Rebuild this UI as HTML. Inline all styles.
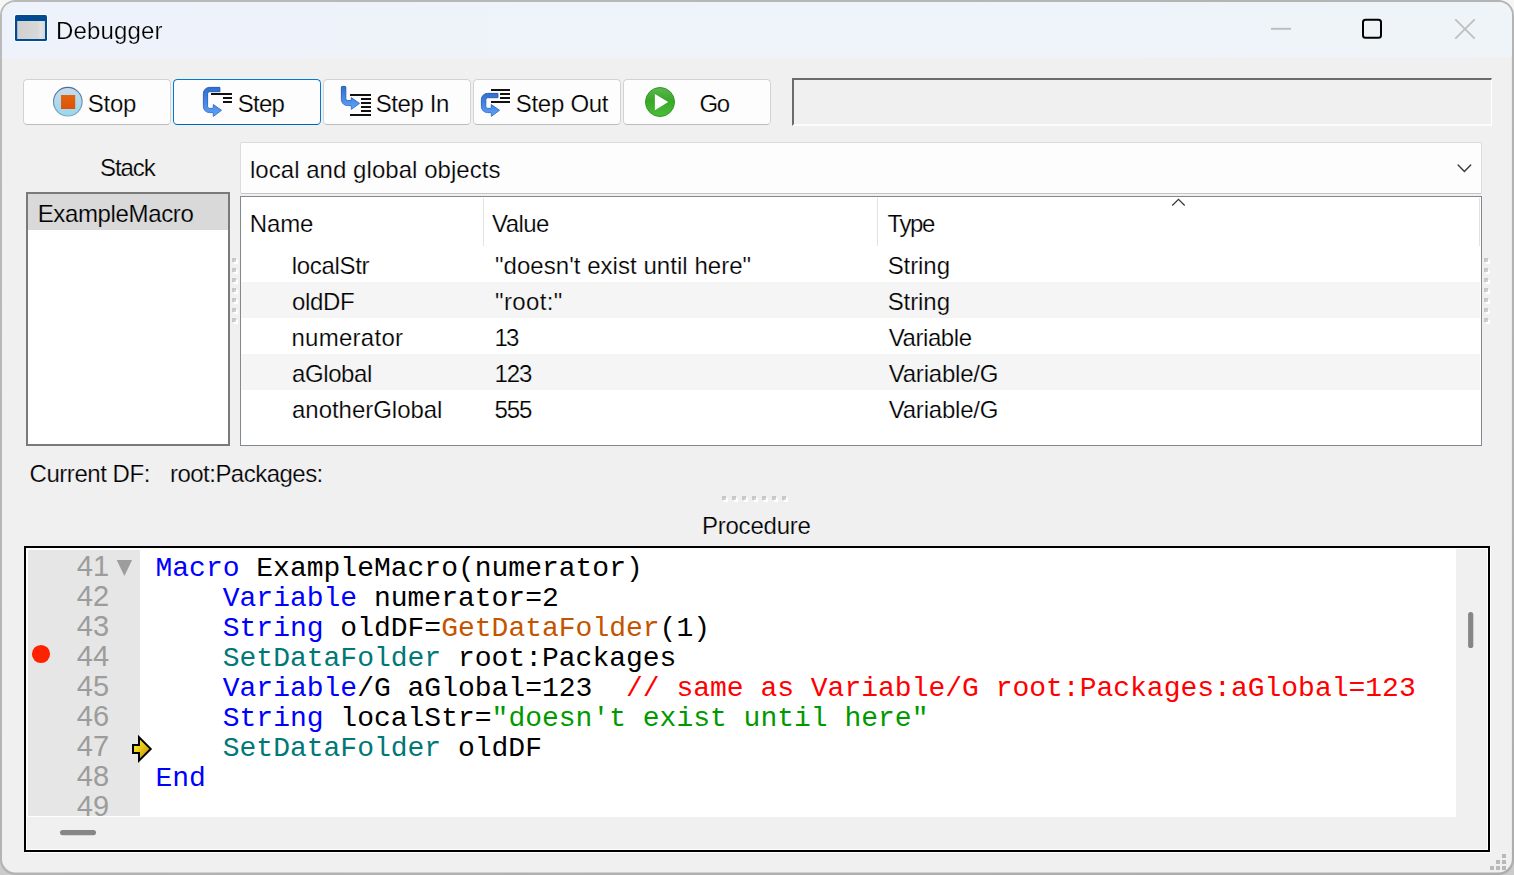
<!DOCTYPE html>
<html>
<head>
<meta charset="utf-8">
<title>Debugger</title>
<style>
html,body{margin:0;padding:0;}
body{width:1514px;height:875px;overflow:hidden;background:linear-gradient(180deg,#f6f6f6 0%,#f2f2f2 50%,#cbcbcb 100%);font-family:"Liberation Sans",sans-serif;position:relative;}
.abs{position:absolute;box-sizing:border-box;}
.t{position:absolute;white-space:pre;line-height:1;font-family:"Liberation Sans",sans-serif;}
.btn{top:79px;width:148px;height:46px;background:#fdfdfd;border:1px solid #d2d2d2;border-bottom-color:#bcbcbc;border-radius:4.5px;}
.btn.focus{border:1.5px solid #0078d4;border-bottom-color:#0064b4;}
#field{left:792px;top:78px;width:700px;height:48px;background:#f0f0f0;border-style:solid;border-width:2px 1px 2px 2px;border-color:#6b6b6b #ffffff #fcfcfc #6b6b6b;}
#combo{left:240px;top:142px;width:1242px;height:52px;background:#fdfdfd;border:1px solid #dcdcdc;border-bottom-color:#c6c6c6;border-radius:2px;}
#stack{left:26px;top:192px;width:204px;height:254px;background:#fff;border:2px solid #7a7a7a;}
#stacksel{left:28px;top:194px;width:200px;height:36px;background:#d9d9d9;}
#table{left:240px;top:196px;width:1242px;height:250px;background:#fff;border:1px solid #828790;}
.stripe{left:241px;width:1239px;height:36px;background:#f5f5f5;}
.hsep{top:198px;width:1px;height:48px;background:#e2e2e2;}
#proc{left:24px;top:546px;width:1466px;height:306px;background:#f0f0f0;border:2px solid #000;box-shadow:1px 1px 0 #fff, inset 0 0 0 1px #fff;}
#codewrap{left:26px;top:548px;width:1430px;height:269px;background:#fff;overflow:hidden;}
#gutter{left:2px;top:2px;width:112px;height:266px;background:#e6e6e6;}
#codearea{left:2px;top:2px;width:1428px;height:267px;overflow:hidden;}
.cl{position:absolute;left:127.5px;white-space:pre;line-height:1;font-family:"Liberation Mono",monospace;font-size:28px;color:#000;}
.ln{position:absolute;left:0;width:81.1px;text-align:right;white-space:pre;line-height:1;font-family:"Liberation Sans",sans-serif;font-size:29px;letter-spacing:0;color:#9c9c9c;}
.k{color:#0000ff}.f{color:#c45500}.o{color:#007878}.c{color:#ff0000}.s{color:#009a00}
#gutterclip{left:0;top:0;width:112px;height:266px;overflow:hidden;}
svg{position:absolute;left:0;top:0;}
</style>
</head>
<body>
<svg width="1514" height="875" viewBox="0 0 1514 875">
<defs>
<linearGradient id="gtb" x1="0" y1="0" x2="1" y2="0"><stop offset="0" stop-color="#eef3fb"/><stop offset="1" stop-color="#eff4f9"/></linearGradient>
<linearGradient id="gfr" x1="0" y1="0" x2="1" y2="1"><stop offset="0" stop-color="#bababa"/><stop offset="1" stop-color="#adadad"/></linearGradient>
<clipPath id="cpc"><rect x="2" y="1.9" width="1509.9" height="870.6" rx="13.5"/></clipPath>
</defs>
<rect x="0" y="0" width="1514" height="875" rx="15.5" fill="url(#gfr)"/>
<rect x="2" y="1.9" width="1509.9" height="870.6" rx="13.5" fill="#f0f0f0"/>
<rect x="0" y="0" width="1514" height="57.6" fill="url(#gtb)" clip-path="url(#cpc)"/>
</svg>

<div class="abs btn" style="left:23px"></div>
<div class="abs btn focus" style="left:173px"></div>
<div class="abs btn" style="left:323px"></div>
<div class="abs btn" style="left:473px"></div>
<div class="abs btn" style="left:623px"></div>
<div id="field" class="abs"></div>

<div id="combo" class="abs"></div>
<div id="stack" class="abs"></div>
<div id="stacksel" class="abs"></div>
<div id="table" class="abs"></div>
<div class="abs stripe" style="top:282px"></div>
<div class="abs stripe" style="top:354px"></div>
<div class="abs hsep" style="left:483px"></div>
<div class="abs hsep" style="left:877px"></div>
<div class="abs hsep" style="left:1479px"></div>

<div id="proc" class="abs"></div>
<div id="codewrap" class="abs">
  <div id="codearea" class="abs">
    <div id="gutter" class="abs" style="left:0;top:0"><div id="gutterclip" class="abs">
<div class="ln" style="top:2px">41</div>
<div class="ln" style="top:32px">42</div>
<div class="ln" style="top:62px">43</div>
<div class="ln" style="top:92px">44</div>
<div class="ln" style="top:122px">45</div>
<div class="ln" style="top:152px">46</div>
<div class="ln" style="top:182px">47</div>
<div class="ln" style="top:212px">48</div>
<div class="ln" style="top:242px">49</div>
    </div></div>
<div class="cl" style="top:5px"><span class="k">Macro</span> ExampleMacro(numerator)</div>
<div class="cl" style="top:35px">    <span class="k">Variable</span> numerator=2</div>
<div class="cl" style="top:65px">    <span class="k">String</span> oldDF=<span class="f">GetDataFolder</span>(1)</div>
<div class="cl" style="top:95px">    <span class="o">SetDataFolder</span> root:Packages</div>
<div class="cl" style="top:125px">    <span class="k">Variable</span>/G aGlobal=123  <span class="c">// same as Variable/G root:Packages:aGlobal=123</span></div>
<div class="cl" style="top:155px">    <span class="k">String</span> localStr=<span class="s">"doesn't exist until here"</span></div>
<div class="cl" style="top:185px">    <span class="o">SetDataFolder</span> oldDF</div>
<div class="cl" style="top:215px"><span class="k">End</span></div>
  </div>
</div>

<div class="t" style="left:55.70px;top:19px;font-size:24px;letter-spacing:0.141px;color:#000;-webkit-text-stroke:0.22px #eef3fb;will-change:transform">Debugger</div>
<div class="t" style="left:87.75px;top:92px;font-size:24px;letter-spacing:-0.265px;color:#000;-webkit-text-stroke:0.22px #fdfdfd">Stop</div>
<div class="t" style="left:237.75px;top:92px;font-size:24px;letter-spacing:-0.765px;color:#000;-webkit-text-stroke:0.22px #fdfdfd">Step</div>
<div class="t" style="left:375.65px;top:92px;font-size:24px;letter-spacing:-0.372px;color:#000;-webkit-text-stroke:0.22px #fdfdfd">Step In</div>
<div class="t" style="left:515.75px;top:92px;font-size:24px;letter-spacing:-0.280px;color:#000;-webkit-text-stroke:0.22px #fdfdfd">Step Out</div>
<div class="t" style="left:699.51px;top:92px;font-size:24px;letter-spacing:-1.510px;color:#000;-webkit-text-stroke:0.22px #fdfdfd">Go</div>
<div class="t" style="left:99.95px;top:156px;font-size:24px;letter-spacing:-1.044px;color:#000;-webkit-text-stroke:0.22px #f0f0f0">Stack</div>
<div class="t" style="left:37.70px;top:202px;font-size:24px;letter-spacing:-0.364px;color:#000;-webkit-text-stroke:0.22px #d9d9d9">ExampleMacro</div>
<div class="t" style="left:249.94px;top:158px;font-size:24px;letter-spacing:0.044px;color:#000;-webkit-text-stroke:0.22px #fdfdfd">local and global objects</div>
<div class="t" style="left:249.80px;top:212px;font-size:24px;letter-spacing:-0.133px;color:#000;-webkit-text-stroke:0.22px #ffffff">Name</div>
<div class="t" style="left:492.10px;top:212px;font-size:24px;letter-spacing:-0.618px;color:#000;-webkit-text-stroke:0.22px #ffffff">Value</div>
<div class="t" style="left:887.44px;top:212px;font-size:24px;letter-spacing:-1.347px;color:#000;-webkit-text-stroke:0.22px #ffffff">Type</div>
<div class="t" style="left:291.74px;top:254px;font-size:24px;letter-spacing:-0.311px;color:#000;-webkit-text-stroke:0.22px #ffffff">localStr</div>
<div class="t" style="left:292.00px;top:290px;font-size:24px;letter-spacing:-0.325px;color:#000;-webkit-text-stroke:0.22px #f5f5f5">oldDF</div>
<div class="t" style="left:291.44px;top:326px;font-size:24px;letter-spacing:0.280px;color:#000;-webkit-text-stroke:0.22px #ffffff">numerator</div>
<div class="t" style="left:292.00px;top:362px;font-size:24px;letter-spacing:-0.404px;color:#000;-webkit-text-stroke:0.22px #f5f5f5">aGlobal</div>
<div class="t" style="left:292.00px;top:398px;font-size:24px;letter-spacing:-0.027px;color:#000;-webkit-text-stroke:0.22px #ffffff">anotherGlobal</div>
<div class="t" style="left:495.00px;top:254px;font-size:24px;letter-spacing:0.040px;color:#000;-webkit-text-stroke:0.22px #ffffff">"doesn't exist until here"</div>
<div class="t" style="left:495.00px;top:290px;font-size:24px;letter-spacing:0.383px;color:#000;-webkit-text-stroke:0.22px #f5f5f5">"root:"</div>
<div class="t" style="left:494.50px;top:326px;font-size:24px;letter-spacing:-1.740px;color:#000;-webkit-text-stroke:0.22px #ffffff">13</div>
<div class="t" style="left:494.50px;top:362px;font-size:24px;letter-spacing:-1.050px;color:#000;-webkit-text-stroke:0.22px #f5f5f5">123</div>
<div class="t" style="left:494.40px;top:398px;font-size:24px;letter-spacing:-1.000px;color:#000;-webkit-text-stroke:0.22px #ffffff">555</div>
<div class="t" style="left:887.65px;top:254px;font-size:24px;letter-spacing:-0.071px;color:#000;-webkit-text-stroke:0.22px #ffffff">String</div>
<div class="t" style="left:887.65px;top:290px;font-size:24px;letter-spacing:-0.071px;color:#000;-webkit-text-stroke:0.22px #f5f5f5">String</div>
<div class="t" style="left:888.69px;top:326px;font-size:24px;letter-spacing:-0.423px;color:#000;-webkit-text-stroke:0.22px #ffffff">Variable</div>
<div class="t" style="left:888.69px;top:362px;font-size:24px;letter-spacing:-0.199px;color:#000;-webkit-text-stroke:0.22px #f5f5f5">Variable/G</div>
<div class="t" style="left:888.69px;top:398px;font-size:24px;letter-spacing:-0.199px;color:#000;-webkit-text-stroke:0.22px #ffffff">Variable/G</div>
<div class="t" style="left:29.59px;top:462px;font-size:24px;letter-spacing:-0.462px;color:#000;-webkit-text-stroke:0.22px #f0f0f0">Current DF:</div>
<div class="t" style="left:169.97px;top:462px;font-size:24px;letter-spacing:-0.521px;color:#000;-webkit-text-stroke:0.22px #f0f0f0">root:Packages:</div>
<div class="t" style="left:701.90px;top:514px;font-size:24px;letter-spacing:-0.212px;color:#000;-webkit-text-stroke:0.22px #f0f0f0">Procedure</div>

<svg width="1514" height="875" viewBox="0 0 1514 875">
<defs>
<linearGradient id="gb" x1="0" y1="0" x2="0" y2="1"><stop offset="0" stop-color="#2f6fcf"/><stop offset="1" stop-color="#5fa2f6"/></linearGradient>
<linearGradient id="gbs" x1="0" y1="0" x2="0" y2="1"><stop offset="0" stop-color="#2458b0"/><stop offset="1" stop-color="#3d7bd6"/></linearGradient>
<linearGradient id="gstop" x1="0" y1="0" x2="0" y2="1"><stop offset="0" stop-color="#c9dbea"/><stop offset="1" stop-color="#98d8ee"/></linearGradient>
<linearGradient id="gstopb" x1="0" y1="0" x2="0" y2="1"><stop offset="0" stop-color="#4f6d96"/><stop offset="1" stop-color="#7fa9c6"/></linearGradient>
<linearGradient id="gor" x1="0" y1="0" x2="0" y2="1"><stop offset="0" stop-color="#e2640f"/><stop offset="1" stop-color="#dd5206"/></linearGradient>
<linearGradient id="ggo" x1="0" y1="0" x2="0" y2="1"><stop offset="0" stop-color="#5db653"/><stop offset="0.45" stop-color="#38a826"/><stop offset="1" stop-color="#4ebc3c"/></linearGradient>
<linearGradient id="gy" x1="0" y1="0" x2="1" y2="1"><stop offset="0.15" stop-color="#ffec28"/><stop offset="0.9" stop-color="#c89200"/></linearGradient>
<linearGradient id="gicon" x1="0" y1="0" x2="1" y2="0"><stop offset="0" stop-color="#d0d0d0"/><stop offset="0.75" stop-color="#d8d8d8"/><stop offset="0.85" stop-color="#e2e2e2"/><stop offset="1" stop-color="#d6d6d6"/></linearGradient>
</defs>

<!-- title icon -->
<rect x="14.2" y="14.2" width="33.6" height="27.6" rx="2.2" fill="#ffffff"/>
<rect x="15" y="15" width="32" height="26" rx="1.6" fill="#004c92"/>
<rect x="17.2" y="21" width="27.8" height="18" fill="url(#gicon)"/>

<!-- caption buttons -->
<line x1="1271" y1="28.8" x2="1291" y2="28.8" stroke="#bdbdbd" stroke-width="1.9"/>
<rect x="1363" y="19.8" width="18" height="18" rx="2.5" fill="none" stroke="#000" stroke-width="2"/>
<path d="M1455.3 19.3 L1474.7 38.7 M1474.7 19.3 L1455.3 38.7" stroke="#c0c0c0" stroke-width="1.9" fill="none"/>

<!-- Stop icon -->
<circle cx="67.8" cy="101.7" r="14.3" fill="url(#gstop)" stroke="url(#gstopb)" stroke-width="1.1"/>
<rect x="61" y="95" width="14.2" height="14" fill="url(#gor)"/>

<!-- Step icon -->
<path d="M219.9 87.4 H209.5 A6.1 6.1 0 0 0 203.4 93.5 V106.5 A6.1 6.1 0 0 0 209.5 112.6 H213.3 V116.4 L221.5 110.3 L213.3 104.6 V108.4 H209.6 A2 2 0 0 1 207.6 106.4 V93.7 A2 2 0 0 1 209.6 91.7 H219.9 Z" fill="url(#gb)" stroke="url(#gbs)" stroke-width="1" stroke-linejoin="round"/>
<rect x="211" y="93" width="21" height="2" fill="#111"/>
<rect x="223" y="97" width="9" height="2" fill="#111"/>
<rect x="223" y="101" width="9" height="2" fill="#111"/>

<!-- Step In icon -->
<path d="M341.4 87 A0.8 0.8 0 0 1 342.2 86.4 H345 A0.8 0.8 0 0 1 345.8 87 V98.6 A2 2 0 0 0 347.8 100.6 H351.3 V97.6 L359.5 103.4 L351.3 109.4 V105.6 H347.5 A6.1 6.1 0 0 1 341.4 99.5 Z" fill="url(#gb)" stroke="url(#gbs)" stroke-width="1" stroke-linejoin="round"/>
<rect x="350" y="94" width="21" height="2" fill="#111"/>
<rect x="361" y="98" width="10" height="2" fill="#111"/>
<rect x="361" y="102" width="10" height="2" fill="#111"/>
<rect x="361" y="106" width="10" height="2" fill="#111"/>
<rect x="361" y="110" width="10" height="2" fill="#111"/>
<rect x="350" y="114" width="21" height="2" fill="#111"/>

<!-- Step Out icon -->
<path d="M497.9 93.4 H487.5 A6.1 6.1 0 0 0 481.4 99.5 V106.5 A6.1 6.1 0 0 0 487.5 112.6 H491.3 V116.4 L499.5 110.3 L491.3 104.6 V108.4 H487.8 A2 2 0 0 1 485.8 106.4 V99.7 A2 2 0 0 1 487.8 97.7 H497.9 Z" fill="url(#gb)" stroke="url(#gbs)" stroke-width="1" stroke-linejoin="round"/>
<rect x="491" y="89" width="19" height="2" fill="#111"/>
<rect x="500" y="93" width="10" height="2" fill="#111"/>
<rect x="500" y="97" width="10" height="2" fill="#111"/>
<rect x="491" y="101" width="19" height="2" fill="#111"/>

<!-- Go icon -->
<circle cx="660" cy="102" r="14.5" fill="url(#ggo)" stroke="#2f9a20" stroke-width="1"/>
<path d="M654.9 94 L668.2 102.1 L654.9 110.2 Z" fill="#fff"/>

<!-- combo chevron -->
<path d="M1458.1 165.1 L1464.4 171.5 L1470.7 165.1" fill="none" stroke="#383838" stroke-width="1.4" stroke-linecap="round"/>
<!-- sort indicator -->
<path d="M1172.3 205.5 L1178.5 199.3 L1184.7 205.5" fill="none" stroke="#333" stroke-width="1.2"/>

<!-- splitter grips: left -->
<g id="gripL"></g>

<!-- code fold triangle -->
<path d="M116.7 560 H132.1 L124.4 576 Z" fill="#9d9d9d"/>
<!-- breakpoint -->
<circle cx="41" cy="654" r="9.1" fill="#ff2200"/>
<!-- current line arrow -->
<path d="M133 745.1 H139 V737.2 L150.7 748.9 L139 760.6 V752.9 H133 Z" fill="url(#gy)" stroke="#000" stroke-width="2" stroke-linejoin="miter"/>

<!-- scrollbar thumbs -->
<rect x="60" y="830" width="36" height="5.2" rx="2.6" fill="#868686"/>
<rect x="1468.1" y="612" width="5.2" height="36" rx="2.6" fill="#868686"/>

<!-- size grip -->
<g fill="#b9b9b9">
<rect x="1502" y="854" width="4" height="4"/>
<rect x="1496" y="860" width="4" height="4"/><rect x="1502" y="860" width="4" height="4"/>
<rect x="1490" y="866" width="4" height="4"/><rect x="1496" y="866" width="4" height="4"/><rect x="1502" y="866" width="4" height="4"/>
</g>
<rect x="724" y="498" width="4" height="4" fill="#fff"/><rect x="722" y="496" width="4" height="4" fill="#c8c8c8"/><rect x="724" y="498" width="2" height="2" fill="#d4d4d4"/>
<rect x="234" y="260" width="4" height="4" fill="#fff"/><rect x="232" y="258" width="4" height="4" fill="#c8c8c8"/><rect x="234" y="260" width="2" height="2" fill="#d4d4d4"/>
<rect x="1486" y="260" width="4" height="4" fill="#fff"/><rect x="1484" y="258" width="4" height="4" fill="#c8c8c8"/><rect x="1486" y="260" width="2" height="2" fill="#d4d4d4"/>
<rect x="734" y="498" width="4" height="4" fill="#fff"/><rect x="732" y="496" width="4" height="4" fill="#c8c8c8"/><rect x="734" y="498" width="2" height="2" fill="#d4d4d4"/>
<rect x="234" y="270" width="4" height="4" fill="#fff"/><rect x="232" y="268" width="4" height="4" fill="#c8c8c8"/><rect x="234" y="270" width="2" height="2" fill="#d4d4d4"/>
<rect x="1486" y="270" width="4" height="4" fill="#fff"/><rect x="1484" y="268" width="4" height="4" fill="#c8c8c8"/><rect x="1486" y="270" width="2" height="2" fill="#d4d4d4"/>
<rect x="744" y="498" width="4" height="4" fill="#fff"/><rect x="742" y="496" width="4" height="4" fill="#c8c8c8"/><rect x="744" y="498" width="2" height="2" fill="#d4d4d4"/>
<rect x="234" y="280" width="4" height="4" fill="#fff"/><rect x="232" y="278" width="4" height="4" fill="#c8c8c8"/><rect x="234" y="280" width="2" height="2" fill="#d4d4d4"/>
<rect x="1486" y="280" width="4" height="4" fill="#fff"/><rect x="1484" y="278" width="4" height="4" fill="#c8c8c8"/><rect x="1486" y="280" width="2" height="2" fill="#d4d4d4"/>
<rect x="754" y="498" width="4" height="4" fill="#fff"/><rect x="752" y="496" width="4" height="4" fill="#c8c8c8"/><rect x="754" y="498" width="2" height="2" fill="#d4d4d4"/>
<rect x="234" y="290" width="4" height="4" fill="#fff"/><rect x="232" y="288" width="4" height="4" fill="#c8c8c8"/><rect x="234" y="290" width="2" height="2" fill="#d4d4d4"/>
<rect x="1486" y="290" width="4" height="4" fill="#fff"/><rect x="1484" y="288" width="4" height="4" fill="#c8c8c8"/><rect x="1486" y="290" width="2" height="2" fill="#d4d4d4"/>
<rect x="764" y="498" width="4" height="4" fill="#fff"/><rect x="762" y="496" width="4" height="4" fill="#c8c8c8"/><rect x="764" y="498" width="2" height="2" fill="#d4d4d4"/>
<rect x="234" y="300" width="4" height="4" fill="#fff"/><rect x="232" y="298" width="4" height="4" fill="#c8c8c8"/><rect x="234" y="300" width="2" height="2" fill="#d4d4d4"/>
<rect x="1486" y="300" width="4" height="4" fill="#fff"/><rect x="1484" y="298" width="4" height="4" fill="#c8c8c8"/><rect x="1486" y="300" width="2" height="2" fill="#d4d4d4"/>
<rect x="774" y="498" width="4" height="4" fill="#fff"/><rect x="772" y="496" width="4" height="4" fill="#c8c8c8"/><rect x="774" y="498" width="2" height="2" fill="#d4d4d4"/>
<rect x="234" y="310" width="4" height="4" fill="#fff"/><rect x="232" y="308" width="4" height="4" fill="#c8c8c8"/><rect x="234" y="310" width="2" height="2" fill="#d4d4d4"/>
<rect x="1486" y="310" width="4" height="4" fill="#fff"/><rect x="1484" y="308" width="4" height="4" fill="#c8c8c8"/><rect x="1486" y="310" width="2" height="2" fill="#d4d4d4"/>
<rect x="784" y="498" width="4" height="4" fill="#fff"/><rect x="782" y="496" width="4" height="4" fill="#c8c8c8"/><rect x="784" y="498" width="2" height="2" fill="#d4d4d4"/>
<rect x="234" y="320" width="4" height="4" fill="#fff"/><rect x="232" y="318" width="4" height="4" fill="#c8c8c8"/><rect x="234" y="320" width="2" height="2" fill="#d4d4d4"/>
<rect x="1486" y="320" width="4" height="4" fill="#fff"/><rect x="1484" y="318" width="4" height="4" fill="#c8c8c8"/><rect x="1486" y="320" width="2" height="2" fill="#d4d4d4"/>
</svg>
</body>
</html>
